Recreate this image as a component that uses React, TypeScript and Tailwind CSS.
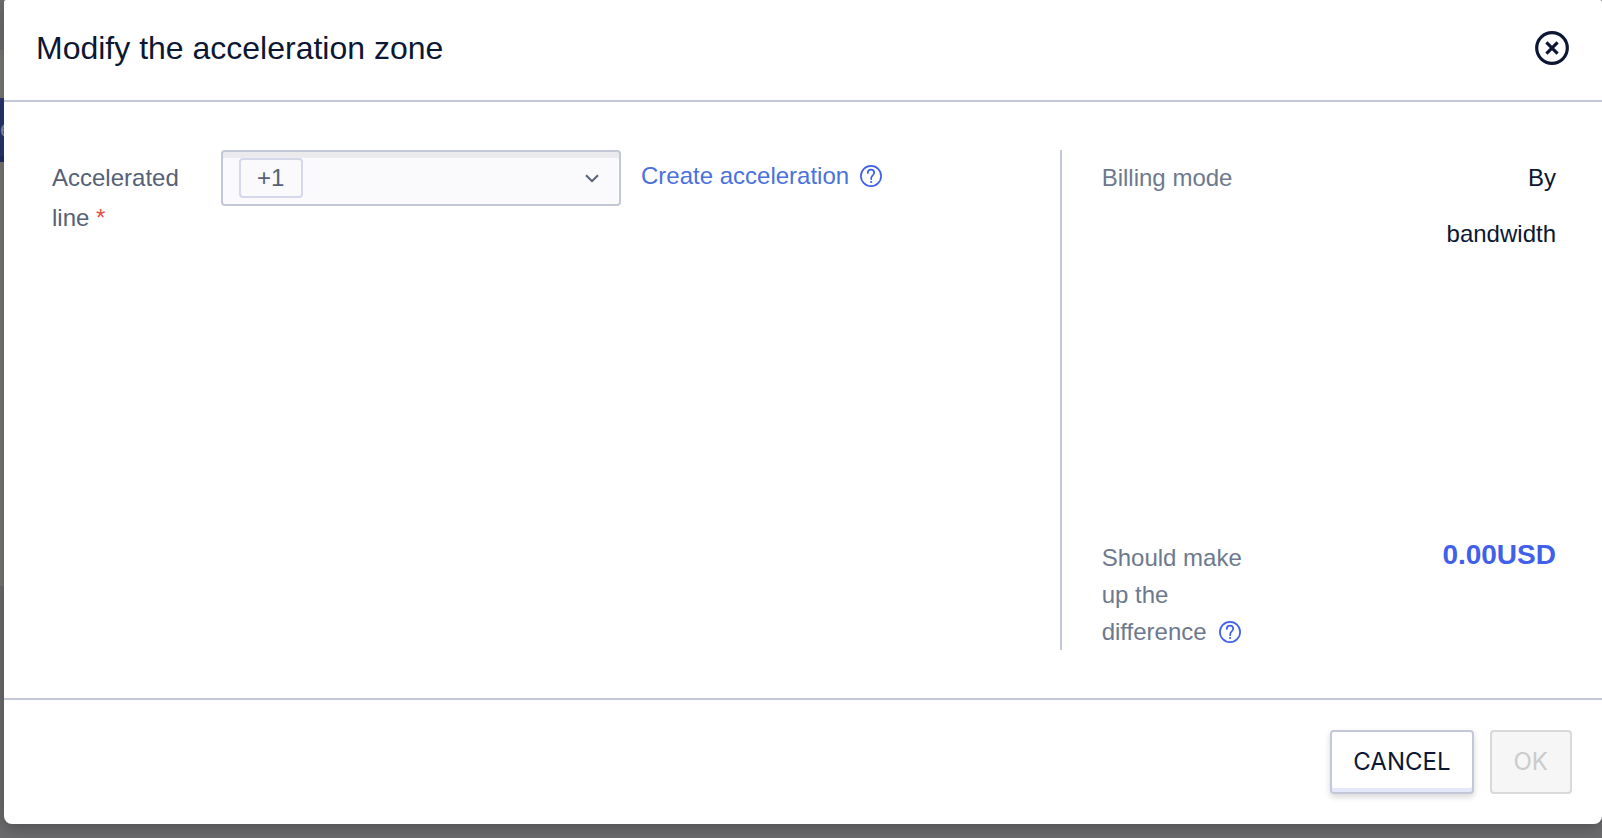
import React, { useState } from 'react';

const CloseIcon = () => (
  <svg width="36" height="36" viewBox="0 0 36 36" fill="none" stroke="currentColor">
    <circle cx="18" cy="18" r="15.3" strokeWidth="3.2" />
    <path d="M12.4 12.4l11.2 11.2M23.6 12.4L12.4 23.6" strokeWidth="3.2" />
  </svg>
);

const HelpIcon = () => (
  <svg width="22" height="22" viewBox="0 0 22 22" fill="none" stroke="currentColor">
    <circle cx="11" cy="11" r="10.1" strokeWidth="1.7" />
    <path
      d="M7.8 8C7.8 6 9.2 4.7 11 4.7s3.2 1.3 3.2 3.1c0 2.5-3 2.8-3 5.4v1"
      strokeWidth="1.7"
      strokeLinecap="round"
    />
    <circle cx="11.1" cy="17" r="1.1" fill="currentColor" stroke="none" />
  </svg>
);

const ChevronIcon = () => (
  <svg width="14" height="9" viewBox="0 0 14 9" fill="none" stroke="currentColor">
    <path d="M1 1.2l6 6 6-6" strokeWidth="2" />
  </svg>
);

// Sliver of the dimmed page that stays visible beside the dialog
const PageEdge = () => (
  <div className="flex w-1 shrink-0 flex-col overflow-hidden bg-[#6b6b6e]" aria-hidden="true">
    <div className="h-[50px] bg-[#6d6c6e]" />
    <div className="h-12 bg-[#787774]" />
    <div className="flex h-16 items-center justify-start border-b-[6px] border-[#222d61] bg-[#28356f] pt-1 text-2xl text-[#8d8f9c]">
      e
    </div>
    <div className="h-[424px] bg-[#787673]" />
  </div>
);

const App = () => {
  const [open, setOpen] = useState(true);
  const [line, setLine] = useState('1');

  return (
    <div className="flex min-h-screen flex-col bg-[#6b6b6e] font-['Liberation_Sans',Arial,sans-serif] text-2xl text-[#0b1733]">
      <div className="flex grow">
        <PageEdge />

        {open && (
          <div
            role="dialog"
            aria-labelledby="dialog-title"
            className="flex min-w-0 flex-1 flex-col rounded-t-xs rounded-b-lg bg-white shadow-[0_4px_16px_rgba(0,0,0,0.25)]"
          >
            <header className="flex h-[102px] items-center justify-between border-b-2 border-[#c3c8d9] px-8 pb-1">
              <h1 id="dialog-title" className="text-[32px] leading-10">
                Modify the acceleration zone
              </h1>
              <button type="button" aria-label="Close" onClick={() => setOpen(false)}>
                <CloseIcon />
              </button>
            </header>

            <div className="flex grow py-12 pr-[46px] pl-12">
              <section className="flex flex-1 items-start">
                <label htmlFor="line" className="w-[169px] shrink-0 pt-2 pr-6 leading-10 text-[#566176]">
                  Accelerated line <span className="text-[#e2503f]">*</span>
                </label>
                <div className="relative w-[400px] text-[#566176]">
                  <select
                    id="line"
                    value={line}
                    onChange={(e) => setLine(e.target.value)}
                    className="h-14 w-full appearance-none rounded-sm border-2 border-[#c3c8d9] bg-[#fafafc] pl-[34px] shadow-[inset_0_6px_0_#ebebed]"
                  >
                    <option value="1">+1</option>
                  </select>
                  <span className="pointer-events-none absolute top-2 left-[18px] h-10 w-16 rounded-sm border-2 border-[#d5d7ea]" />
                  <span className="pointer-events-none absolute top-6 right-[22px]">
                    <ChevronIcon />
                  </span>
                </div>
                <div className="ml-5 flex h-[52px] items-center gap-[11px]">
                  <a href="#create" className="text-[#4a72dc]">
                    Create acceleration
                  </a>
                  <button type="button" aria-label="About acceleration" className="text-[#4060ea]">
                    <HelpIcon />
                  </button>
                </div>
              </section>

              <aside className="flex min-h-[500px] w-[33%] flex-col justify-between border-l-2 border-[#c3c8d9] pl-10">
                <div className="flex justify-between leading-[56px]">
                  <span className="text-[#6d798e]">Billing mode</span>
                  <span className="w-[140px] text-right">By bandwidth</span>
                </div>
                <div className="flex items-start justify-between">
                  <div className="w-40 leading-[37px] text-[#6d798e]">
                    Should make up the
                    <span className="flex items-center gap-3">
                      difference
                      <button type="button" aria-label="About the difference" className="text-[#4060ea]">
                        <HelpIcon />
                      </button>
                    </span>
                  </div>
                  <strong className="text-[28px] leading-8 text-[#4060ea]">0.00USD</strong>
                </div>
              </aside>
            </div>

            <footer className="flex justify-end gap-4 border-t-2 border-[#c3c8d9] px-[30px] py-[30px] font-['Inter',sans-serif]">
              <button
                type="button"
                onClick={() => setOpen(false)}
                className="h-16 rounded-sm border-2 border-[#c3c8d9] bg-white px-[21px] shadow-[inset_0_-4px_0_#e4e8fb,0_3px_6px_rgba(0,0,0,0.16)]"
              >
                CANCEL
              </button>
              <button
                type="button"
                disabled
                className="h-16 rounded-sm border-2 border-[#d9d9d9] bg-[#f6f6f6] px-[22px] text-[#cbcbcb]"
              >
                OK
              </button>
            </footer>
          </div>
        )}
      </div>
      <div className="h-[14px]" />
    </div>
  );
};

export default App;
